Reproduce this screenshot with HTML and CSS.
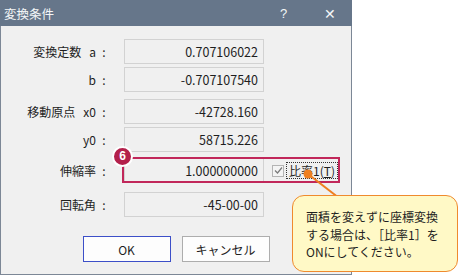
FILE: index.html
```html
<!DOCTYPE html>
<html lang="ja">
  <head>
    <meta charset="UTF-8" />
    <title>変換条件</title>
    <link rel="stylesheet" href="styles.css">
  </head>
  <body>
    <div class="dialog">
      <div class="titlebar">
        <span class="title">変換条件</span>
        <span class="help">?</span>
        <span class="close">✕</span>
      </div>

      <div class="form">
        <div class="row">
          <span class="label">変換定数<span class="var">a</span></span>
          <span class="colon">:</span>
          <span class="field">0.707106022</span>
        </div>
        <div class="row tight">
          <span class="label">b</span>
          <span class="colon">:</span>
          <span class="field">-0.707107540</span>
        </div>
        <div class="row group">
          <span class="label">移動原点<span class="var">x0</span></span>
          <span class="colon">:</span>
          <span class="field">-42728.160</span>
        </div>
        <div class="row tight">
          <span class="label">y0</span>
          <span class="colon">:</span>
          <span class="field">58715.226</span>
        </div>
        <div class="row scale">
          <span class="label">伸縮率</span>
          <span class="colon">:</span>
          <span class="field">1.000000000</span>
          <span class="check">
            <span class="box">
              <svg width="9" height="9" viewBox="0 0 9 9"><path d="M1 4.5 L3.5 7 L8 1.5" fill="none" stroke="#7a7a7a" stroke-width="1.2"/></svg>
            </span>
            <span class="check-label">比率1(<u>T</u>)</span>
          </span>
        </div>
        <div class="row rotate">
          <span class="label">回転角</span>
          <span class="colon">:</span>
          <span class="field">-45-00-00</span>
        </div>
      </div>

      <div class="buttons">
        <button class="btn default">OK</button>
        <button class="btn">キャンセル</button>
      </div>
    </div>

    <!-- annotation -->
    <div class="highlight"></div>
    <div class="badge">6</div>
    <svg class="leader" width="459" height="275" viewBox="0 0 459 275">
      <line x1="308" y1="174" x2="339" y2="198" stroke="#ef7f1f" stroke-width="2"/>
      <circle cx="308" cy="174" r="4.5" fill="#ef7f1f"/>
    </svg>
    <div class="callout">
      <p>面積を変えずに座標変換</p>
      <p>する場合は、［比率1］を</p>
      <p>ONにしてください。</p>
    </div>
  </body>
</html>
```

FILE: styles.css
```css
* {
  margin: 0;
  padding: 0;
}

body {
  background: #fff;
  font-family: "Noto Sans CJK JP", "Noto Sans", sans-serif;
  font-size: 12px;
  color: #1e1e1e;
  width: 459px;
  height: 275px;
  position: relative;
  overflow: hidden;
}

.dialog {
  width: 352px;
  height: 275px;
  box-sizing: border-box;
  background: #f0f0f0;
  border-left: 1px solid #7c8796;
  border-right: 1px solid #7c8796;
  border-bottom: 1px solid #7c8796;
}

.titlebar {
  height: 26px;
  margin: 0 -1px;
  background: #66768a;
  color: #f4f6f8;
  display: flex;
  align-items: center;
  padding-left: 4px;
  font-size: 12.5px;
}

.title {
  flex: 1;
}

.help {
  font-family: "Liberation Sans", sans-serif;
  font-size: 13px;
  width: 10px;
}

.close {
  font-size: 14px;
  margin-left: 34px;
  margin-right: 16px;
}

.form {
  padding-top: 13px;
}

.row {
  display: flex;
  align-items: center;
  height: 25px;
}

.row.tight {
  margin-top: 3px;
}

.row.group {
  margin-top: 7px;
}

.row.scale {
  margin-top: 6px;
}

.row.rotate {
  margin-top: 9px;
}

.label {
  width: 95px;
  text-align: right;
}

.var {
  margin-left: 8px;
}

.colon {
  width: 16px;
  text-align: center;
}

.field {
  margin-left: 12px;
  width: 140px;
  height: 25px;
  box-sizing: border-box;
  border: 1px solid #d2d2d2;
  background: #f0f0f0;
  text-align: right;
  padding-right: 5px;
  line-height: 23px;
  font-size: 12.5px;
}

.check {
  display: flex;
  align-items: center;
  margin-left: 8px;
}

.box {
  width: 10px;
  height: 10px;
  border: 1px solid #b4b4b4;
  background: #f4f4f4;
  display: flex;
  align-items: center;
  justify-content: center;
}

.check-label {
  margin-left: 2px;
  padding: 0 2px;
  border: 1px dotted #333;
  line-height: 15px;
}

.buttons {
  display: flex;
  justify-content: center;
  gap: 11px;
  margin-top: 19px;
}

.btn {
  width: 88px;
  height: 26px;
  border: 1px solid #adadad;
  background: #fdfdfd;
  font-family: "Noto Sans CJK JP", sans-serif;
  font-size: 12px;
  color: #1e1e1e;
}

.btn.default {
  border-color: #3c4fc8;
}

.highlight {
  position: absolute;
  left: 122px;
  top: 157px;
  width: 218px;
  height: 26px;
  box-sizing: border-box;
  border: 2.5px solid #c1275a;
}

.badge {
  position: absolute;
  left: 112px;
  top: 146px;
  width: 17px;
  height: 17px;
  border-radius: 50%;
  border: 2px solid #fff;
  background: #b3204b;
  color: #fff;
  font-family: "Liberation Sans", sans-serif;
  font-weight: bold;
  font-size: 12px;
  line-height: 17px;
  text-align: center;
}

.leader {
  position: absolute;
  left: 0;
  top: 0;
}

.callout {
  position: absolute;
  left: 292px;
  top: 195px;
  width: 166px;
  height: 77px;
  box-sizing: border-box;
  border: 1.5px solid #ef8a2e;
  border-radius: 12px;
  background: #fff9c6;
  padding: 12px 0 0 13px;
  font-size: 12px;
  line-height: 17.5px;
  color: #1e1e1e;
}
```
